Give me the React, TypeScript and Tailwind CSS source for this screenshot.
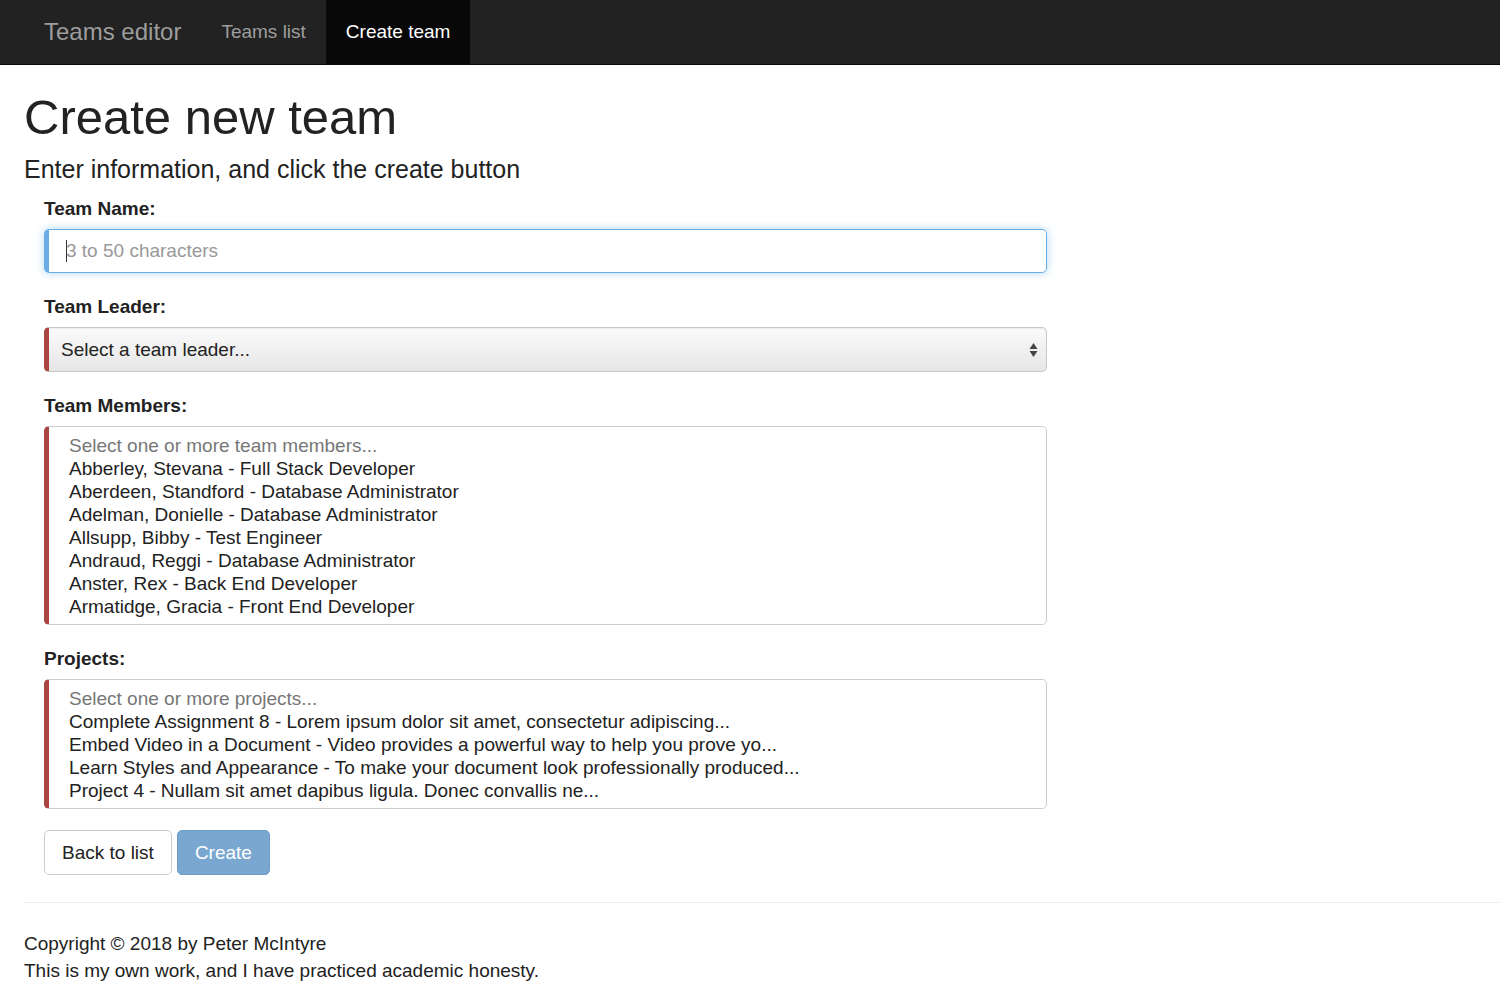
export default function App() {
  const members = [
    "Abberley, Stevana - Full Stack Developer",
    "Aberdeen, Standford - Database Administrator",
    "Adelman, Donielle - Database Administrator",
    "Allsupp, Bibby - Test Engineer",
    "Andraud, Reggi - Database Administrator",
    "Anster, Rex - Back End Developer",
    "Armatidge, Gracia - Front End Developer",
  ]
  const projects = [
    "Complete Assignment 8 - Lorem ipsum dolor sit amet, consectetur adipiscing...",
    "Embed Video in a Document - Video provides a powerful way to help you prove yo...",
    "Learn Styles and Appearance - To make your document look professionally produced...",
    "Project 4 - Nullam sit amet dapibus ligula. Donec convallis ne...",
  ]

  return (
    <div className="min-h-screen bg-white text-[#333] font-['Liberation_Sans',Arial,sans-serif] overflow-hidden">
      {/* Navbar */}
      <nav className="h-[65px] bg-[#222] border-b border-[#080808] flex items-stretch">
        <div className="pl-[44px] pr-[20px] flex items-center text-[24px] text-[#9d9d9d]">Teams editor</div>
        <a className="px-[20px] flex items-center text-[19px] text-[#9d9d9d]">Teams list</a>
        <a className="px-[20px] flex items-center text-[19px] text-white bg-[#080808]">Create team</a>
      </nav>

      <main className="px-[24px]">
        <h1 className="text-[49px] leading-[1.1] font-normal mt-[26px] mb-[11px] text-[#222]">Create new team</h1>
        <h4 className="text-[25px] leading-[1.1] text-[#222] mb-[14px]">Enter information, and click the create button</h4>

        <form className="pl-[20px] w-[1023px]" onSubmit={(e) => e.preventDefault()}>
          <div className="mb-[22px]">
            <label className="block font-bold text-[19px] leading-[24px] mb-[8px] text-[#222]">Team Name:</label>
            <div className="h-[44px] rounded-[5px] border border-[#66afe9] border-l-[5px] border-l-[#6aade4] shadow-[0_0_8px_rgba(102,175,233,0.5)] flex items-center pl-[17px] text-[19px]">
              <span className="w-px h-[22px] bg-[#333]"></span>
              <span className="text-[#999] -ml-px">3 to 50 characters</span>
            </div>
          </div>

          <div className="mb-[22px]">
            <label className="block font-bold text-[19px] leading-[24px] mb-[8px] text-[#222]">Team Leader:</label>
            <div className="h-[45px] rounded-[5px] border border-[#c8c8c8] border-l-[5px] border-l-[#a94442] bg-gradient-to-b from-[#fbfbfb] to-[#e6e6e6] shadow-[inset_0_1px_1px_rgba(0,0,0,0.06)] flex items-center justify-between pl-[12px] pr-[8px] text-[19px] text-[#222]">
              <span>Select a team leader...</span>
              <svg width="9" height="16" viewBox="0 0 9 16" className="text-[#444]">
                <path d="M4.5 1 L8.5 7 L0.5 7 Z" fill="currentColor" />
                <path d="M0.5 9 L8.5 9 L4.5 15 Z" fill="currentColor" />
              </svg>
            </div>
          </div>

          <div className="mb-[22px]">
            <label className="block font-bold text-[19px] leading-[24px] mb-[8px] text-[#222]">Team Members:</label>
            <div className="h-[199px] rounded-[5px] border border-[#ccc] border-l-[5px] border-l-[#a94442] pl-[20px] pt-[7px] text-[19px] leading-[23px] text-[#222]">
              <div className="text-[#777]">Select one or more team members...</div>
              {members.map((m) => (
                <div key={m}>{m}</div>
              ))}
            </div>
          </div>

          <div className="mb-[21px]">
            <label className="block font-bold text-[19px] leading-[24px] mb-[8px] text-[#222]">Projects:</label>
            <div className="h-[130px] rounded-[5px] border border-[#ccc] border-l-[5px] border-l-[#a94442] pl-[20px] pt-[7px] text-[19px] leading-[23px] text-[#222]">
              <div className="text-[#777]">Select one or more projects...</div>
              {projects.map((p) => (
                <div key={p}>{p}</div>
              ))}
            </div>
          </div>

          <div className="flex gap-[5px]">
            <button type="button" className="h-[45px] px-[17px] rounded-[5px] border border-[#ccc] bg-white text-[19px] text-[#222]">Back to list</button>
            <button type="submit" disabled className="h-[45px] px-[17px] rounded-[5px] border border-[#6f9cc7] bg-[#7aa7d0] text-[19px] text-white">Create</button>
          </div>
        </form>

        <hr className="mt-[27px] border-t border-[#eee] -mr-[24px]" />

        <footer className="pt-[27px] text-[19px] leading-[27px] text-[#222]">
          <p>Copyright © 2018 by Peter McIntyre</p>
          <p>This is my own work, and I have practiced academic honesty.</p>
        </footer>
      </main>
    </div>
  )
}
